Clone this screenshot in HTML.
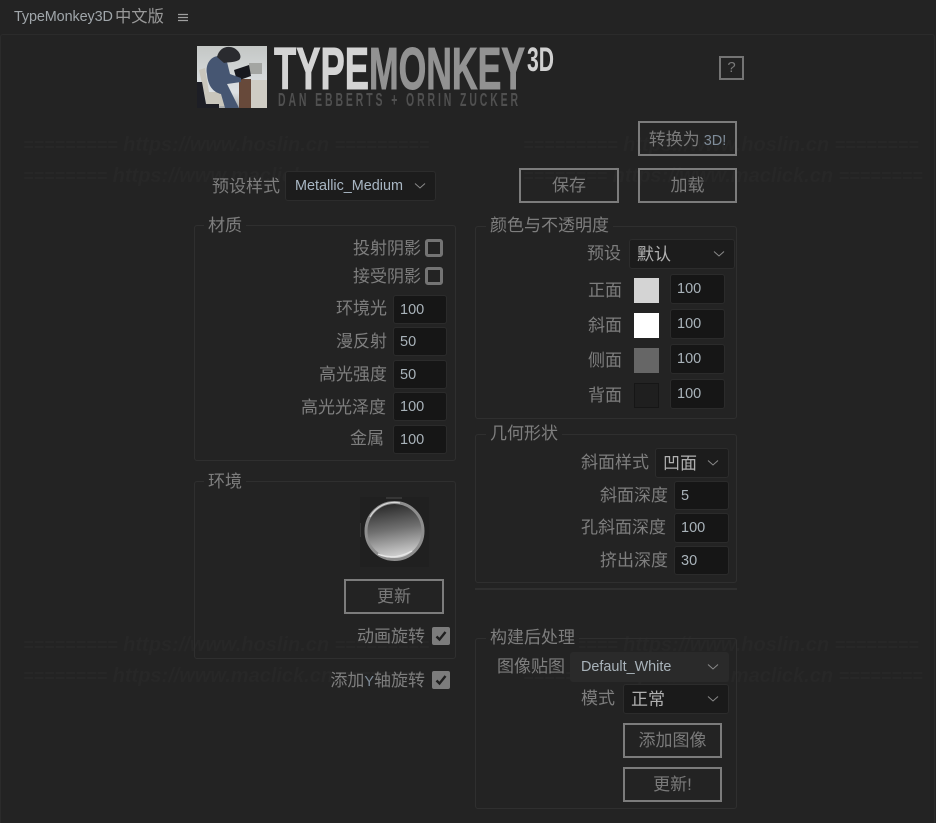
<!DOCTYPE html>
<html lang="zh"><head><meta charset="utf-8"><title>TypeMonkey3D 中文版</title>
<style>
*{box-sizing:border-box}
html,body{margin:0;padding:0;width:936px;height:823px;overflow:hidden;background:#232323}
body{position:relative;font-family:"Liberation Sans","Noto Sans CJK SC",sans-serif;color:#808080;font-size:17px}
div,span.a,svg{position:absolute}
.l{white-space:nowrap;line-height:26px;height:26px;text-align:right;font-size:17px;color:#7e7e7e}
.p{border:1px solid #2f2f2f;border-radius:3px}
.g{white-space:nowrap;line-height:26px;height:26px;background:#232323;padding:0 4px 0 4px;font-size:17px;color:#7e7e7e;margin-left:-4px}
.i{background:#161616;border:1px solid #2b2b2b;border-radius:3px;color:#a9b3ba;font-size:14.5px;padding-left:6px;width:54px;height:29px;line-height:29px}
.s{background:#1c1c1c;border:1px solid #2c2c2c;border-radius:3px;color:#b0b0b0;white-space:nowrap;padding-left:7px;height:30px;line-height:29px;font-size:17px}
.s svg{right:9px;top:10px}
.b{border:2px solid #7c7c7c;background:transparent;color:#7a7a7a;text-align:center;font-size:17px;white-space:nowrap;width:100px;height:35px;line-height:32px}
.c{width:18px;height:18px;border:3px solid #747474;border-radius:3px}
.k{width:18px;height:18px;background:#7c7c7c;border-radius:2px}
.w{font:italic bold 20px "Liberation Sans",sans-serif;color:#272727;white-space:nowrap;line-height:22px;height:22px}
.w span{font-size:18px}
.q{width:25px;height:24px;border-width:0}
</style></head><body>

<div class="w" style="left:23px;top:134px"><span>=========</span> https://www.hoslin.cn <span>=========</span></div>
<div class="w" style="left:23px;top:165px"><span>========</span> https://www.maclick.cn <span>========</span></div>
<div class="w" style="left:523px;top:134px"><span>=========</span> https://www.hoslin.cn <span>========</span></div>
<div class="w" style="left:523px;top:165px"><span>========</span> https://www.maclick.cn <span>========</span></div>
<div class="w" style="left:23px;top:634px"><span>=========</span> https://www.hoslin.cn <span>=========</span></div>
<div class="w" style="left:23px;top:665px"><span>========</span> https://www.maclick.cn <span>========</span></div>
<div class="w" style="left:523px;top:634px"><span>=========</span> https://www.hoslin.cn <span>========</span></div>
<div class="w" style="left:523px;top:665px"><span>========</span> https://www.maclick.cn <span>========</span></div>

<div style="left:14px;top:5px;height:24px;line-height:24px;font-size:14.4px;color:#a0a6aa;white-space:nowrap;letter-spacing:-.1px">TypeMonkey3D</div>
<div style="left:115px;top:5px;height:24px;line-height:24px;font-size:16.3px;color:#9a9a9a;white-space:nowrap">中文版</div>
<svg style="left:178px;top:13px" width="11" height="10"><path d="M0 1.5H10M0 4.5H10M0 7.5H10" stroke="#a0a0a0" stroke-width="1.2"/></svg>
<div style="left:0;top:34px;width:935px;height:790px;border:1px solid #2b2b2b;border-radius:3px 3px 0 0"></div>

<svg style="left:197px;top:46px" width="70" height="62" viewBox="0 0 70 62">
<defs><linearGradient id="sky" x1="0" y1="0" x2="0" y2="1"><stop offset="0" stop-color="#c4c7c5"/><stop offset=".75" stop-color="#dde1e4"/><stop offset="1" stop-color="#a9abab"/></linearGradient></defs>
<rect width="70" height="62" fill="url(#sky)"/>
<path d="M52 34H70V62H52Z" fill="#cfccc4"/>
<path d="M42 33H54V62H42Z" fill="#67493a"/>
<path d="M2 24L8 22L12 46H34V60H10Z" fill="#c9c6bc"/>
<path d="M0 36H5L9 58H22V62H0Z" fill="#1d1e25"/>
<path d="M52 17H65V28H52Z" fill="#a3a5a2"/>
<path d="M37 24L52 19L54 30L40 35Z" fill="#17181e"/>
<path d="M10 28C8 18 14 10 22 10L30 16L33 28L44 32V36L30 38L42 62H28L24 48C16 46 11 40 10 28Z" fill="#465672"/>
<path d="M20 11C22 2 30 -1 37 2C41 4 46 10 42 14C36 17 30 16 27 17Z" fill="#2a2b2f"/>
</svg>

<svg style="left:270px;top:40px" width="300" height="72" viewBox="0 0 300 72">
<text x="4" y="49" font-family="Liberation Sans" font-weight="700" font-size="59" fill="#d4d4d4" stroke="#d4d4d4" stroke-width="1" textLength="95" lengthAdjust="spacingAndGlyphs">TYPE</text>
<text x="99" y="49" font-family="Liberation Sans" font-weight="700" font-size="59" fill="#929292" stroke="#929292" stroke-width="1" textLength="156" lengthAdjust="spacingAndGlyphs">MONKEY</text>
<text x="257" y="31" font-family="Liberation Sans" font-weight="700" font-size="34" fill="#d0d0d0" textLength="27" lengthAdjust="spacingAndGlyphs">3D</text>
<text x="8" y="66" font-family="Liberation Sans" font-weight="700" font-size="18" letter-spacing="5" fill="#505050" textLength="243" lengthAdjust="spacingAndGlyphs">DAN EBBERTS + ORRIN ZUCKER</text>
</svg>

<div class="b q" style="left:719px;top:56px;border:2px solid #747474;line-height:20px;font-size:15px">?</div>
<div class="b" style="left:638px;top:121px;width:99px;line-height:33px">转换为<span style="font-size:14.5px;color:#7f8c99"> 3D!</span></div>
<div class="b" style="left:519px;top:168px">保存</div>
<div class="b" style="left:638px;top:168px;width:99px">加载</div>

<div class="l" style="left:212px;top:174px">预设样式</div>
<div class="s" style="left:285px;top:171px;width:151px;color:#a9b7c4;font-size:14.4px;padding-left:9px">Metallic_Medium<svg width="12" height="8"><path d="M1 1.5L6 6L11 1.5" fill="none" stroke="#8a8a8a"/></svg></div>

<!-- 材质 -->
<div class="p" style="left:194px;top:225px;width:262px;height:236px"></div>
<div class="g" style="left:208px;top:213px">材质</div>
<div class="l" style="right:515px;top:236px">投射阴影</div><div class="c" style="left:425px;top:239px"></div>
<div class="l" style="right:515px;top:264px">接受阴影</div><div class="c" style="left:425px;top:267px"></div>
<div class="l" style="right:549px;top:296px">环境光</div><div class="i" style="left:393px;top:295px">100</div>
<div class="l" style="right:549px;top:329px">漫反射</div><div class="i" style="left:393px;top:327px">50</div>
<div class="l" style="right:549px;top:362px">高光强度</div><div class="i" style="left:393px;top:360px">50</div>
<div class="l" style="right:550px;top:395px">高光光泽度</div><div class="i" style="left:393px;top:392px">100</div>
<div class="l" style="right:552px;top:426px">金属</div><div class="i" style="left:393px;top:425px">100</div>

<!-- 环境 -->
<div class="p" style="left:194px;top:481px;width:262px;height:178px"></div>
<div class="g" style="left:208px;top:469px">环境</div>
<svg style="left:360px;top:497px" width="69" height="70" viewBox="0 0 69 70">
<defs><linearGradient id="sp" x1="0.35" y1="0.05" x2="0.5" y2="1"><stop offset="0" stop-color="#2e2e2e"/><stop offset=".45" stop-color="#707070"/><stop offset="1" stop-color="#d8d8d8"/></linearGradient></defs>
<rect width="69" height="70" fill="#202020"/>
<circle cx="34.5" cy="34" r="28" fill="url(#sp)"/>
<circle cx="34.5" cy="34" r="28.5" fill="none" stroke="#8e8e8e" stroke-width="3"/>
<path d="M10 20A28 28 0 0 1 40 6" fill="none" stroke="#d8d8d8" stroke-width="1.2"/>
<path d="M18 57Q34 64 52 54" fill="none" stroke="#e6e6e6" stroke-width="1.5"/>
<path d="M26 1H42M0 26V40" stroke="#4c4c4c"/>
</svg>
<div class="b" style="left:344px;top:579px">更新</div>
<div class="l" style="right:511px;top:624px">动画旋转</div>
<div class="k" style="left:432px;top:627px"><svg style="left:3px;top:3px" width="12" height="12"><path d="M1.5 6.5L4.5 9.5L10.5 2" fill="none" stroke="#1f1f1f" stroke-width="2.4"/></svg></div>
<div class="l" style="right:511px;top:668px">添加<span style="color:#7f8c99;font-size:14.5px">Y</span>轴旋转</div>
<div class="k" style="left:432px;top:671px"><svg style="left:3px;top:3px" width="12" height="12"><path d="M1.5 6.5L4.5 9.5L10.5 2" fill="none" stroke="#1f1f1f" stroke-width="2.4"/></svg></div>

<!-- 颜色 -->
<div class="p" style="left:475px;top:226px;width:262px;height:193px"></div>
<div class="g" style="left:490px;top:213px">颜色与不透明度</div>
<div class="l" style="right:315px;top:241px">预设</div>
<div class="s" style="left:629px;top:239px;width:106px">默认<svg width="12" height="8"><path d="M1 1.5L6 6L11 1.5" fill="none" stroke="#8a8a8a"/></svg></div>
<div class="l" style="right:314px;top:278px">正面</div><div style="left:634px;top:278px;width:25px;height:25px;background:#d4d4d4"></div><div class="i" style="left:670px;top:274px;width:55px;height:30px;line-height:29px">100</div>
<div class="l" style="right:314px;top:313px">斜面</div><div style="left:634px;top:313px;width:25px;height:25px;background:#fff"></div><div class="i" style="left:670px;top:309px;width:55px;height:30px;line-height:29px">100</div>
<div class="l" style="right:314px;top:348px">侧面</div><div style="left:634px;top:348px;width:25px;height:25px;background:#666"></div><div class="i" style="left:670px;top:344px;width:55px;height:30px;line-height:29px">100</div>
<div class="l" style="right:314px;top:383px">背面</div><div style="left:634px;top:383px;width:25px;height:25px;background:#1f1f1f;border:1px solid #161616"></div><div class="i" style="left:670px;top:379px;width:55px;height:30px;line-height:29px">100</div>

<!-- 几何 -->
<div class="p" style="left:475px;top:434px;width:262px;height:149px"></div>
<div class="g" style="left:490px;top:421px">几何形状</div>
<div class="l" style="right:287px;top:450px">斜面样式</div>
<div class="s" style="left:655px;top:448px;width:74px">凹面<svg width="12" height="8"><path d="M1 1.5L6 6L11 1.5" fill="none" stroke="#8a8a8a"/></svg></div>
<div class="l" style="right:268px;top:483px">斜面深度</div><div class="i" style="left:674px;top:481px;width:55px;height:29px">5</div>
<div class="l" style="right:270px;top:515px">孔斜面深度</div><div class="i" style="left:674px;top:513px;width:55px;height:30px;line-height:29px">100</div>
<div class="l" style="right:268px;top:548px">挤出深度</div><div class="i" style="left:674px;top:546px;width:55px;height:29px">30</div>
<div style="left:475px;top:588px;width:262px;height:2px;background:#2f2f2f"></div>

<!-- 构建后处理 -->
<div class="p" style="left:475px;top:638px;width:262px;height:171px"></div>
<div class="g" style="left:490px;top:625px">构建后处理</div>
<div class="l" style="right:371px;top:654px">图像贴图</div>
<div class="s" style="left:570px;top:652px;width:159px;background:#2a2a2a;border-color:#2a2a2a;color:#a9b3ba;font-size:14.4px;padding-left:10px">Default_White<svg width="12" height="8"><path d="M1 1.5L6 6L11 1.5" fill="none" stroke="#8a8a8a"/></svg></div>
<div class="l" style="right:321px;top:686px">模式</div>
<div class="s" style="left:623px;top:684px;width:106px;background:#1a1a1a">正常<svg width="12" height="8"><path d="M1 1.5L6 6L11 1.5" fill="none" stroke="#8a8a8a"/></svg></div>
<div class="b" style="left:623px;top:723px;width:99px">添加图像</div>
<div class="b" style="left:623px;top:767px;width:99px">更新!</div>
</body></html>
